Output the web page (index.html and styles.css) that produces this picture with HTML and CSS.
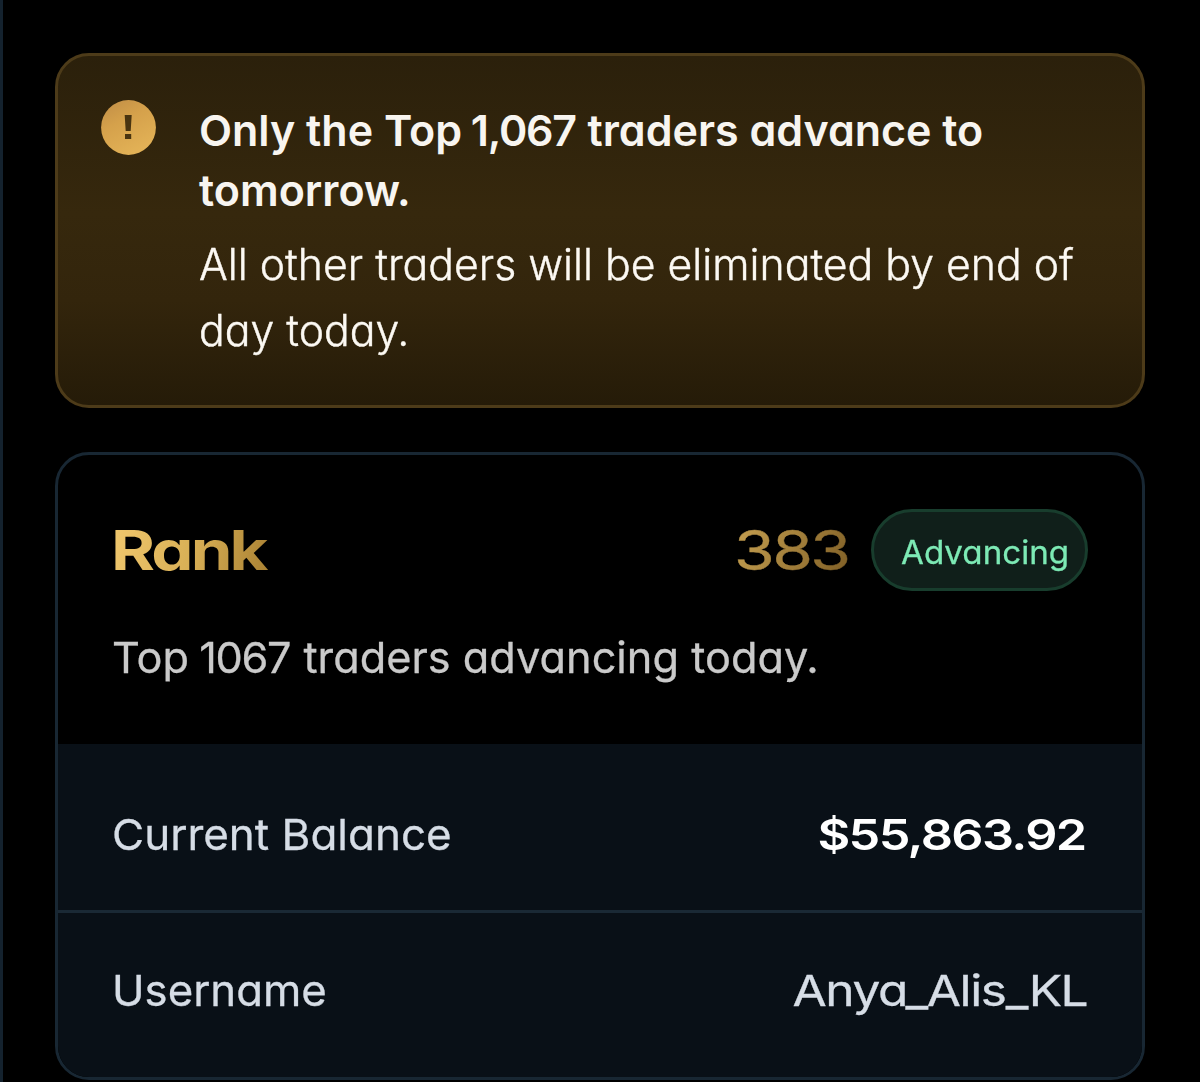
FILE: index.html
```html
<!DOCTYPE html>
<html lang="en">
<head>
<meta charset="utf-8">
<title>Rank</title>
<link rel="stylesheet" href="styles.css">
</head>
<body>
<main class="page">
  <section class="alert">
    <svg class="alert-icon" viewBox="0 0 55 55" aria-hidden="true">
      <defs><linearGradient id="gold" x1="0" y1="0" x2="0.5" y2="1"><stop offset="0" stop-color="#c08d46"/><stop offset="0.45" stop-color="#d5a14b"/><stop offset="1" stop-color="#e2b156"/></linearGradient></defs>
      <circle cx="27.500" cy="27.500" r="27.400" fill="url(#gold)"/>
      <path d="M23.700 15h7l-1 16h-5z" fill="#493410"/>
      <rect x="24" y="34" width="6.200" height="5" fill="#493410"/>
    </svg>
    <div class="alert-body">
      <h2 class="alert-title"><span class="line t1">Only the Top <span class="num">1,067</span> traders advance to</span> <span class="line t2">tomorrow.</span></h2>
      <p class="alert-text"><span class="line p1">All other traders will be eliminated by end of</span> <span class="line p2">day today.</span></p>
    </div>
  </section>
  <section class="card">
    <header class="card-head">
      <div class="rank-row">
        <h1 class="rank-title"><span class="line r1">Rank</span></h1>
        <div class="rank-value"><span class="line r2">383</span></div>
        <div class="badge"><span class="line b1">Advancing</span></div>
      </div>
      <p class="rank-note"><span class="line n1">Top <span class="num">1067</span> traders advancing today.</span></p>
    </header>
    <div class="row">
      <span class="line l1">Current Balance</span>
      <strong class="line v1">$55,863.92</strong>
    </div>
    <div class="row row-last">
      <span class="line l2">Username</span>
      <span class="line v2">Anya_Alis_KL</span>
    </div>
  </section>
</main>
</body>
</html>
```
FILE: styles.css
```css
* { box-sizing: border-box; }
body { margin: 0; background: #000; color: #fff; font-family: Inter, "Liberation Sans", sans-serif; font-feature-settings: "cv11" 1; }
h1, h2, p { margin: 0; }
.page { height: 1082px; overflow: hidden; border-left: 3px solid #14222e; padding: 53px 55px 0 52px; }
.line { display: block; width: max-content; white-space: nowrap; transform-origin: 0 50%; }
.num { margin-left: -2px; margin-right: 1px; letter-spacing: -1.3px; }
.alert { display: flex; gap: 43px; height: 355px; padding: 44px 43px; border: 3px solid #4d3b19; border-radius: 34px; background: linear-gradient(#2b200b, #36280d 45%, #33250c 70%, #251b08); }
.alert-icon { flex: none; width: 55px; height: 55px; }
.alert-title { font-size: 43px; line-height: 60px; font-weight: 600; color: #f8f5f0; }
.alert-text { margin-top: 11px; font-size: 43px; line-height: 66px; font-weight: 300; color: #fcf9f3; -webkit-text-stroke: 0.4px #fcf9f3; }
.p1, .p2 { transform: scaleX(0.994); }
.card { margin-top: 44px; height: 628px; border: 3px solid #182733; border-radius: 34px; overflow: hidden; }
.card-head { height: 289px; padding: 53px 54px 0 54px; }
.rank-row { display: flex; align-items: center; height: 83px; }
.rank-title { flex: 1; font-size: 55px; line-height: 66px; font-weight: 700; }
.r1, .r2 { color: transparent; background-clip: text; -webkit-background-clip: text; }
.r1 { margin-left: -1px; padding-right: 4px; letter-spacing: -2.4px; background-image: linear-gradient(100deg, #f1c86e, #d9b056 50%, #a77f31); transform: scaleX(1.22); }
.r2 { margin-left: -1px; padding-right: 3px; letter-spacing: -2.2px; background-image: linear-gradient(110deg, #c8a252, #7c5c24); -webkit-text-stroke: 0.4px transparent; transform: scaleX(1.2); }
.rank-value { width: 112px; margin-right: 24px; font-size: 55px; line-height: 66px; }
.badge { width: 217px; height: 82px; padding: 0 0 0 27px; border: 3px solid #183d2d; border-radius: 41px; background: #101f1a; color: #7deab5; font-size: 33px; line-height: 80px; -webkit-text-stroke: 0.3px #7deab5; }
.b1 { transform: scaleX(1.005); }
.rank-note { margin-top: 36px; font-size: 43px; line-height: 60px; color: #cacaca; -webkit-text-stroke: 0.3px #cacaca; }
.n1 { transform: scaleX(1.007); }
.row { display: flex; justify-content: space-between; align-items: center; height: 169px; padding: 14px 55px 0 54px; background: #091017; border-bottom: 3px solid #1a2935; font-size: 43px; line-height: 60px; color: #d6dde6; -webkit-text-stroke: 0.3px #d6dde6; }
.row-last { height: 164px; padding-top: 0; padding-bottom: 11px; border: 0; }
.l1 { transform: scaleX(1.023); }
.l2 { transform: scaleX(1.018); }
.v1 { margin-right: 1px; color: #fff; font-weight: 600; letter-spacing: -1.4px; transform: scaleX(1.173); -webkit-text-stroke: 0; }
.v2 { letter-spacing: -1.2px; transform: scaleX(1.155); }
.v1, .v2 { transform-origin: 100% 50%; }
```
